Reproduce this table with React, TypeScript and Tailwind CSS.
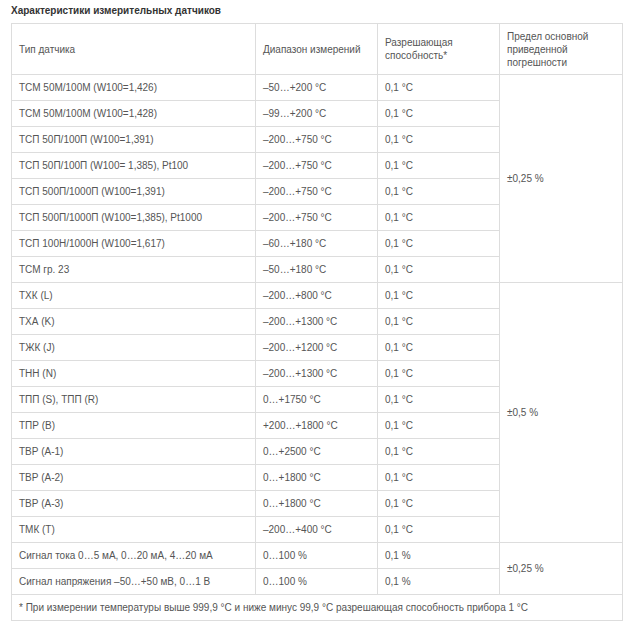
const rows: [string, string, string][] = [
  ['ТСМ 50М/100М (W100=1,426)', '–50…+200 °C', '0,1 °C'],
  ['ТСМ 50М/100М (W100=1,428)', '–99…+200 °C', '0,1 °C'],
  ['ТСП 50П/100П (W100=1,391)', '–200…+750 °C', '0,1 °C'],
  ['ТСП 50П/100П (W100= 1,385), Pt100', '–200…+750 °C', '0,1 °C'],
  ['ТСП 500П/1000П (W100=1,391)', '–200…+750 °C', '0,1 °C'],
  ['ТСП 500П/1000П (W100=1,385), Pt1000', '–200…+750 °C', '0,1 °C'],
  ['ТСП 100Н/1000Н (W100=1,617)', '–60…+180 °C', '0,1 °C'],
  ['ТСМ гр. 23', '–50…+180 °C', '0,1 °C'],
  ['ТХК (L)', '–200…+800 °C', '0,1 °C'],
  ['ТХА (K)', '–200…+1300 °C', '0,1 °C'],
  ['ТЖК (J)', '–200…+1200 °C', '0,1 °C'],
  ['ТНН (N)', '–200…+1300 °C', '0,1 °C'],
  ['ТПП (S), ТПП (R)', '0…+1750 °C', '0,1 °C'],
  ['ТПР (B)', '+200…+1800 °C', '0,1 °C'],
  ['ТВР (А-1)', '0…+2500 °C', '0,1 °C'],
  ['ТВР (А-2)', '0…+1800 °C', '0,1 °C'],
  ['ТВР (А-3)', '0…+1800 °C', '0,1 °C'],
  ['ТМК (Т)', '–200…+400 °C', '0,1 °C'],
  ['Сигнал тока 0…5 мА, 0…20 мА, 4…20 мА', '0…100 %', '0,1 %'],
  ['Сигнал напряжения –50…+50 мВ, 0…1 В', '0…100 %', '0,1 %'],
];

// rows where the error column starts, with its span
const groups: Record<number, [number, string]> = {
  0: [8, '±0,25 %'],
  8: [10, '±0,5 %'],
  18: [2, '±0,25 %'],
};

const cell = 'border border-[#dddddd] px-[7px] py-0 align-middle leading-[13px]';

export default function App() {
  return (
    <div
      className="bg-white px-[11px] pt-[4px] pb-[9px] text-[10px] text-[#555555]"
      style={{ fontFamily: '"Liberation Sans", Arial, sans-serif' }}
    >
      <div className="h-[19px] font-bold leading-[13px] text-[#333333]">Характеристики измерительных датчиков</div>
      <table className="w-[611px] table-fixed border-collapse">
        <colgroup>
          <col className="w-[244px]" />
          <col className="w-[122px]" />
          <col className="w-[122px]" />
          <col className="w-[123px]" />
        </colgroup>
        <thead>
          <tr className="h-[51px]">
            <td className={cell}>Тип датчика</td>
            <td className={cell}>Диапазон измерений</td>
            <td className={cell}>
              Разрешающая
              <br />
              способность*
            </td>
            <td className={cell}>
              Предел основной
              <br />
              приведенной
              <br />
              погрешности
            </td>
          </tr>
        </thead>
        <tbody>
          {rows.map(([name, range, res], i) => (
            <tr key={i} className="h-[26px]">
              <td className={cell}>{name}</td>
              <td className={cell}>{range}</td>
              <td className={cell}>{res}</td>
              {groups[i] && (
                <td className={cell} rowSpan={groups[i][0]}>
                  {groups[i][1]}
                </td>
              )}
            </tr>
          ))}
          <tr className="h-[26px]">
            <td className={cell} colSpan={4}>
              * При измерении температуры выше 999,9 °C и ниже минус 99,9 °C разрешающая способность прибора 1 °C
            </td>
          </tr>
        </tbody>
      </table>
    </div>
  );
}
